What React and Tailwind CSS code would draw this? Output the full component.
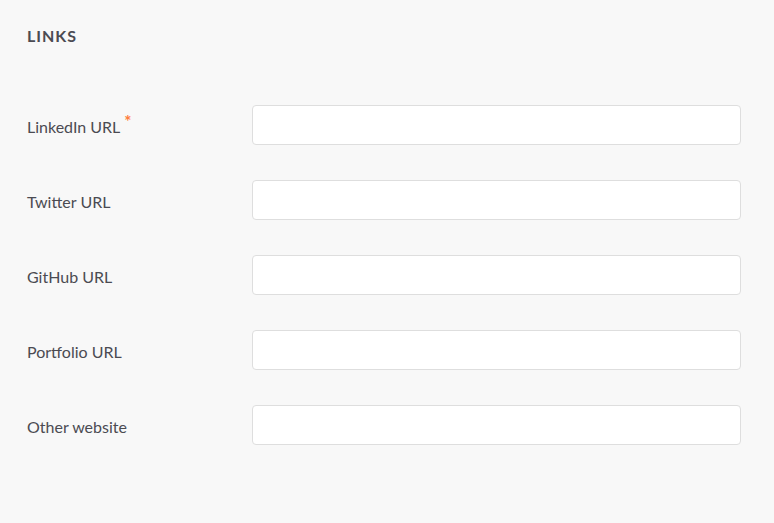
export default function App() {
    const fields = [
        { id: 'linkedin', label: 'LinkedIn URL', required: true },
        { id: 'twitter', label: 'Twitter URL' },
        { id: 'github', label: 'GitHub URL' },
        { id: 'portfolio', label: 'Portfolio URL' },
        { id: 'other', label: 'Other website' },
    ];

    return (
        <div className="min-h-[523px] bg-[#f8f8f8] pl-[27px] pr-[33px] pt-[27px] text-[#4b4b52]" style={{ fontFamily: 'Lato, "Open Sans", sans-serif' }}>
            <h2 className="text-[16px] font-bold tracking-[0.06em] leading-[18px]">LINKS</h2>

            <div className="mt-[60px] flex flex-col gap-[35px]">
                {fields.map((f) => (
                    <div key={f.id} className="flex items-center">
                        <label htmlFor={f.id} className="w-[225px] shrink-0 text-[16px] pt-[4px]">
                            {f.label}
                            {f.required && (
                                <span className="relative -top-[5px] ml-[4px] text-[17px] font-bold text-[#ff7d3b]">*</span>
                            )}
                        </label>
                        <input
                            id={f.id}
                            type="text"
                            className="h-[40px] flex-1 rounded-[4px] border border-[#dedede] bg-white px-3 outline-none"
                        />
                    </div>
                ))}
            </div>
        </div>
    );
}
